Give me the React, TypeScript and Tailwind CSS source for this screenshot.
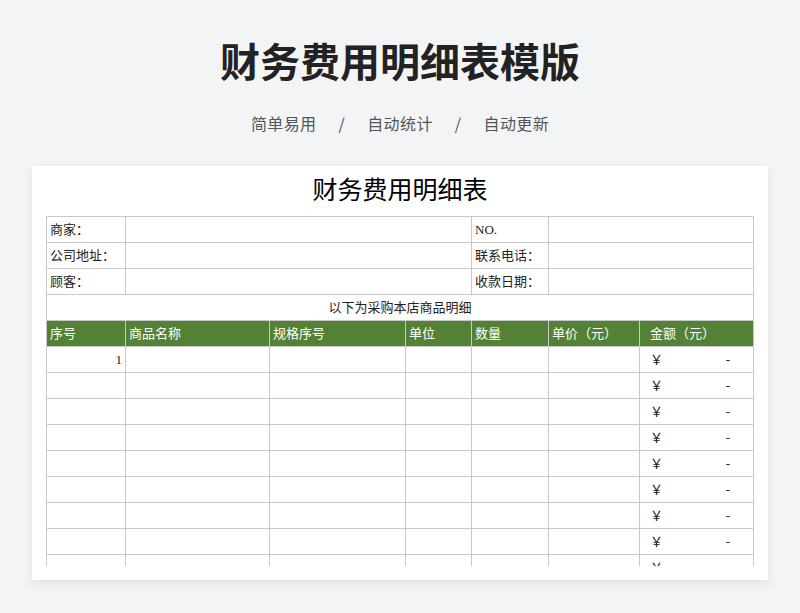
const cols = [79, 144, 136, 66, 77, 91, 114];
const headers = ['序号', '商品名称', '规格序号', '单位', '数量', '单价（元）', '金额（元）'];

export default function App() {
  const serif = { fontFamily: '"Liberation Serif", "Noto Sans CJK SC", serif' };
  const cell = 'border border-[#c8c8c8] h-[26px] px-[3px] text-[13px] text-[#222] align-middle';
  return (
    <div className="w-[800px] h-[613px] bg-[#f3f4f6] overflow-hidden" style={{ fontFamily: '"Noto Sans CJK SC", sans-serif' }}>
      <h1 className="pt-[32px] text-center text-[40px] font-bold leading-[56px] text-[#222]">财务费用明细表模版</h1>
      <p className="mt-[23px] text-center text-[16px] leading-[24px] text-[#555] tracking-wide">
        简单易用<span className="mx-[22px]">/</span>自动统计<span className="mx-[22px]">/</span>自动更新
      </p>
      <div className="mx-[32px] mt-[31px] h-[414px] bg-white shadow-[0_4px_10px_rgba(0,0,0,0.08)] pt-[8px] px-[14px]">
        <div className="text-center text-[25px] leading-[34px] text-black" style={serif}>财务费用明细表</div>
        <div className="mt-[8px] h-[350px] overflow-hidden" style={serif}>
          <table className="border-collapse table-fixed w-[707px]">
            <colgroup>{cols.map((w, i) => <col key={i} style={{ width: w }} />)}</colgroup>
            <tbody>
              {[['商家：', 'NO.'], ['公司地址：', '联系电话：'], ['顾客：', '收款日期：']].map(([a, b]) => (
                <tr key={a}>
                  <td className={cell}>{a}</td>
                  <td className={cell} colSpan={3}></td>
                  <td className={cell}>{b}</td>
                  <td className={cell} colSpan={2}></td>
                </tr>
              ))}
              <tr><td className={`${cell} text-center`} colSpan={7}>以下为采购本店商品明细</td></tr>
              <tr>
                {headers.map((h, i) => (
                  <td key={h} className={`${cell} bg-[#538135] text-white ${i === 6 ? 'pl-[10px]' : ''}`}>{h}</td>
                ))}
              </tr>
              {Array.from({ length: 9 }).map((_, r) => (
                <tr key={r}>
                  <td className={`${cell} text-right`}>{r === 0 ? '1' : ''}</td>
                  <td className={cell}></td><td className={cell}></td><td className={cell}></td>
                  <td className={cell}></td><td className={cell}></td>
                  <td className={`${cell} pl-[10px]`}>
                    <div className="flex justify-between pr-[20px]"><span>￥</span><span>-</span></div>
                  </td>
                </tr>
              ))}
            </tbody>
          </table>
        </div>
      </div>
    </div>
  );
}
